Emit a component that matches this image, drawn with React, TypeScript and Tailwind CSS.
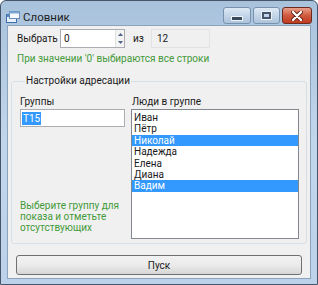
import React from "react";

const people = [
  { name: "Иван", sel: false },
  { name: "Пётр", sel: false },
  { name: "Николай", sel: true },
  { name: "Надежда", sel: false },
  { name: "Елена", sel: false },
  { name: "Диана", sel: false },
  { name: "Вадим", sel: true },
];

function AppIcon() {
  return (
    <svg width="14" height="12" viewBox="0 0 14 12">
      <rect x="0.5" y="3.5" width="10" height="8" fill="#e8f0f8" stroke="#3f6ea8" />
      <rect x="0.5" y="3.5" width="10" height="2.5" fill="#4f86c6" />
      <rect x="3.5" y="0.5" width="10" height="7" fill="#f6f9fc" stroke="#6b8fb8" />
      <rect x="3.5" y="0.5" width="10" height="2" fill="#7aa6d6" />
    </svg>
  );
}

export default function App() {
  return (
    <div
      className="w-[318px] h-[285px] flex flex-col bg-gradient-to-b from-[#a9c2dc] via-[#c2d6eb] to-[#bcd2ea] border border-[#46566a] rounded-t-[6px] overflow-hidden"
      style={{ fontFamily: 'Roboto, "Liberation Sans", Arial, sans-serif' }}
    >
      {/* title bar */}
      <div className="h-[24px] flex items-start shrink-0">
        <div className="flex items-center gap-[3px] pl-[5px] pt-[9px]">
          <AppIcon />
          <span className="text-[11.5px] leading-[14px] text-[#1e1e1e]">Словник</span>
        </div>
        <div className="ml-auto flex items-start gap-[2px] pt-[6px] pr-[5px]">
          <div className="w-[28px] h-[17px] rounded-[3px] border border-[#7891ad] bg-gradient-to-b from-[#dfe9f4] via-[#c3d5e8] to-[#adc4dc] flex items-center justify-center">
            <div className="w-[10px] h-[3px] mt-[5px] bg-[#3a4a5e] border border-[#eef3f8] box-content" />
          </div>
          <div className="w-[27px] h-[17px] rounded-[3px] border border-[#7891ad] bg-gradient-to-b from-[#dfe9f4] via-[#c3d5e8] to-[#adc4dc] flex items-center justify-center">
            <div className="w-[9px] h-[7px] border-2 border-[#44566c] outline outline-1 outline-[#eef3f8]" />
          </div>
          <div className="w-[30px] h-[17px] rounded-[3px] border border-[#6a2a1e] bg-gradient-to-b from-[#e6a08c] via-[#d05a3e] to-[#c03a20] flex items-center justify-center">
            <svg width="12" height="10" viewBox="0 0 12 10">
              <path d="M2 1 L10 9 M10 1 L2 9" stroke="#5a1a10" strokeWidth="4" strokeLinecap="round" />
              <path d="M2 1 L10 9 M10 1 L2 9" stroke="#ffffff" strokeWidth="2.4" strokeLinecap="round" />
            </svg>
          </div>
        </div>
      </div>

      {/* client */}
      <div className="flex-1 mx-[6px] mb-[5px] border border-[#8ba3bd] bg-[#f0f0f0] flex flex-col text-[10px] text-[#1a1a1a]">
        {/* row 1 */}
        <div className="flex items-center h-[19px] mt-[3px] pl-[9px]">
          <span className="w-[43px]">Выбрать</span>
          <div className="w-[65px] h-[19px] bg-white border border-[#abadb3] flex items-center">
            <span className="pl-[3px] flex-1">0</span>
            <div className="w-[9px] h-full flex flex-col border-l border-[#e0e0e0]">
              <div className="flex-1 flex items-center justify-center bg-[#f4f4f4]">
                <svg width="5" height="3" viewBox="0 0 5 3"><path d="M0 3 L2.5 0 L5 3 Z" fill="#4d6185" /></svg>
              </div>
              <div className="flex-1 flex items-center justify-center bg-[#f4f4f4]">
                <svg width="5" height="3" viewBox="0 0 5 3"><path d="M0 0 L2.5 3 L5 0 Z" fill="#4d6185" /></svg>
              </div>
            </div>
          </div>
          <span className="ml-[8px] w-[18px]">из</span>
          <div className="w-[59px] h-[19px] border border-[#e2e2e2] bg-[#f0f0f0] flex items-center pl-[5px]">12</div>
        </div>

        {/* hint */}
        <div className="pl-[9px] mt-[4px] leading-[13px] text-[#439a3a]">
          При значении '0' выбираются все строки
        </div>

        {/* group box */}
        <fieldset className="mx-[3px] mt-[9px] border border-[#d5dfe5] rounded-[3px] pl-[8px] pr-[7px] pb-[4px] flex">
          <legend className="ml-[5px] px-[1px] leading-[14px]">Настройки адресации</legend>
          <div className="flex w-full pt-[7px]">
            <div className="w-[105px] flex flex-col">
              <div className="leading-[14px]">Группы</div>
              <div className="h-[18px] bg-white border border-[#abadb3] flex items-center pl-[1px]">
                <span className="bg-[#3399ff] text-white leading-[13px] px-[1px]">T15</span>
              </div>
              <div className="mt-auto mb-[6px] leading-[11px] text-[#439a3a] whitespace-nowrap">
                Выберите группу для
                <br />
                показа и отметьте
                <br />
                отсутствующих
              </div>
            </div>
            <div className="ml-[6px] flex-1 flex flex-col">
              <div className="leading-[14px] pl-[1px]">Люди в группе</div>
              <div className="h-[130px] bg-white border border-[#828790] pt-[2px]">
                {people.map((p) => (
                  <div
                    key={p.name}
                    className={
                      p.sel
                        ? "h-[11.4px] leading-[11px] pl-[2px] bg-[#3399ff] text-white"
                        : "h-[11.4px] leading-[11px] pl-[2px]"
                    }
                  >
                    {p.name}
                  </div>
                ))}
              </div>
            </div>
          </div>
        </fieldset>

        {/* button */}
        <div className="px-[8px] mt-[11px]">
          <button className="w-full h-[20px] rounded-[3px] border border-[#707070] bg-gradient-to-b from-[#f2f2f2] via-[#ebebeb] to-[#d6d6d6] text-[10px] text-[#1a1a1a] flex items-center justify-center">
            Пуск
          </button>
        </div>
      </div>
    </div>
  );
}
